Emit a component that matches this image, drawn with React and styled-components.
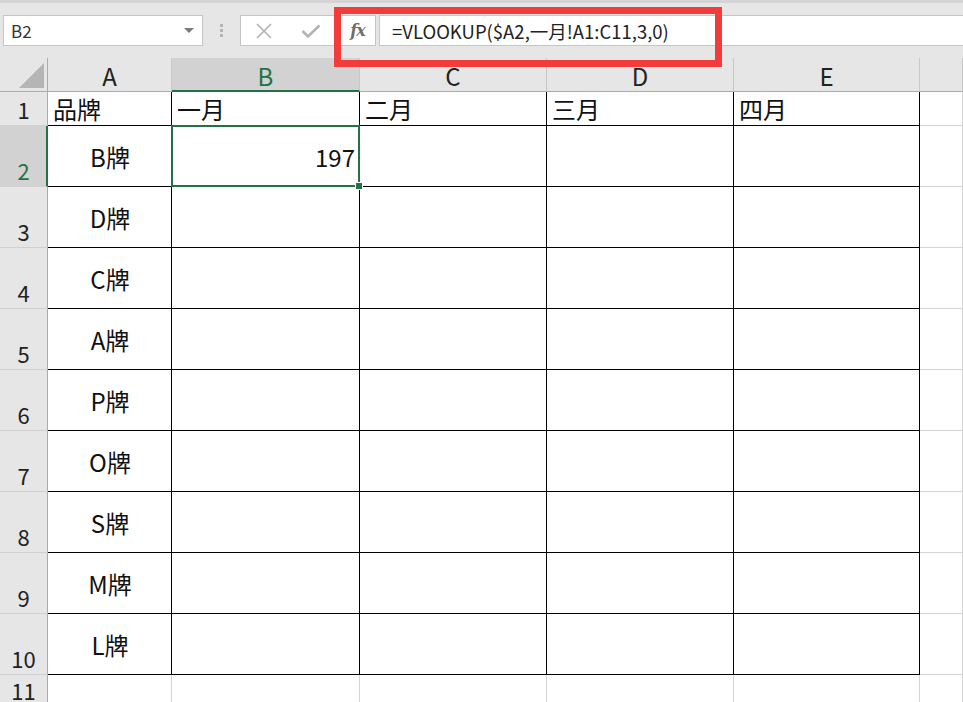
import React from 'react';
import styled, { createGlobalStyle, css } from 'styled-components';

const GlobalStyle = createGlobalStyle`
  html, body { margin: 0; padding: 0; background: #e6e6e6; overflow: hidden; }
  body { font-family: "Noto Sans CJK SC", "Noto Sans", sans-serif; }
`;

const GREEN = '#217346';

const Page = styled.div`
  width: 963px;
  height: 702px;
  overflow: hidden;
  background: #e6e6e6;
`;

const FormulaBar = styled.div`
  position: relative;
  height: 58px;
  box-sizing: border-box;
  border-top: 3px solid #d4d4d4;
  padding-top: 12px;
  display: flex;
  align-items: flex-start;
  background: #e6e6e6;
`;

const NameBox = styled.div`
  margin-left: 3px;
  width: 200px;
  height: 31px;
  box-sizing: border-box;
  background: #fff;
  border: 1px solid #c6c6c6;
  display: flex;
  align-items: center;
  justify-content: space-between;
  padding: 0 8px 0 7px;
  font-size: 17px;
  color: #333;
`;

const Caret = styled.span`
  width: 0;
  height: 0;
  border-left: 5px solid transparent;
  border-right: 5px solid transparent;
  border-top: 5px solid #7b7b7b;
`;

const Grip = styled.div`
  width: 37px;
  height: 31px;
  display: flex;
  flex-direction: column;
  align-items: center;
  justify-content: center;
  gap: 2px;
  span {
    width: 3px;
    height: 3px;
    background: #b4b4b4;
  }
`;

const ActionBox = styled.div`
  width: ${p => p.$w}px;
  height: 31px;
  box-sizing: border-box;
  margin-right: 3px;
  background: #fff;
  border: 1px solid #c6c6c6;
  display: flex;
  align-items: center;
  justify-content: ${p => (p.$center ? 'center' : 'space-around')};
`;

const Fx = styled.span`
  font-family: "DejaVu Serif", "Liberation Serif", serif;
  font-style: italic;
  font-weight: bold;
  font-size: 16px;
  color: #6e6e6e;
  letter-spacing: -1px;
`;

const FormulaInput = styled.div`
  flex: 1;
  height: 31px;
  box-sizing: border-box;
  background: #fff;
  border: 1px solid #c6c6c6;
  border-right: none;
  display: flex;
  align-items: center;
  padding-left: 12px;
  font-size: 18.5px;
  color: #222;
  white-space: nowrap;
`;

const Highlight = styled.div`
  position: absolute;
  left: 334px;
  top: 4px;
  width: 388px;
  height: 60px;
  box-sizing: border-box;
  border: 7px solid #f23b3b;
  pointer-events: none;
`;

const Sheet = styled.div`
  display: grid;
  grid-template-columns: 48px 124px 188px 187px 187px 186px 1fr;
  grid-template-rows: 34px 34px repeat(9, 61px) 27px;
  background: #fff;
`;

const Corner = styled.div`
  background: #e6e6e6;
  border-right: 1px solid #ababab;
  border-bottom: 1px solid #ababab;
  box-sizing: border-box;
  display: flex;
  align-items: flex-end;
  justify-content: flex-end;
  padding: 0 3px 3px 0;
  svg { display: block; }
`;

const ColHead = styled.div`
  box-sizing: border-box;
  background: ${p => (p.$active ? '#d2d2d2' : '#e6e6e6')};
  border-right: 1px solid #c8c8c8;
  border-bottom: ${p => (p.$active ? `2px solid ${GREEN}` : '1px solid #ababab')};
  color: ${p => (p.$active ? GREEN : '#222')};
  font-size: 24px;
  display: flex;
  align-items: center;
  justify-content: center;
  padding-top: 2px;
  ${p => p.$active && css`padding-top: 3px;`}
`;

const RowHead = styled.div`
  box-sizing: border-box;
  background: ${p => (p.$active ? '#d2d2d2' : '#e6e6e6')};
  border-right: ${p => (p.$active ? `2px solid ${GREEN}` : '1px solid #ababab')};
  border-bottom: ${p => (p.$open ? 'none' : '1px solid #d0d0d0')};
  color: ${p => (p.$active ? GREEN : '#222')};
  font-size: 22px;
  line-height: 1;
  display: flex;
  align-items: flex-end;
  justify-content: center;
  padding-bottom: ${p => (p.$open ? '1px' : '5px')};
  ${p => p.$active && css`padding-left: 1px;`}
`;

const Cell = styled.div`
  position: relative;
  box-sizing: border-box;
  border-right: 1px solid ${p => (p.$inTable ? '#000' : '#d4d4d4')};
  border-bottom: ${p => (p.$open ? 'none' : `1px solid ${p.$inTable ? '#000' : '#d4d4d4'}`)};
  font-size: 24px;
  color: #111;
  display: flex;
  align-items: center;
  justify-content: ${p => p.$align || 'flex-start'};
  padding: 0 4px 0 5px;
  white-space: nowrap;
  ${p => p.$selected && css`
    &::after {
      content: '';
      position: absolute;
      top: -1px;
      left: -1px;
      right: -1px;
      bottom: -1px;
      border: 2px solid ${GREEN};
      pointer-events: none;
    }
  `}
`;

const FillHandle = styled.span`
  position: absolute;
  right: -4px;
  bottom: -4px;
  width: 6px;
  height: 6px;
  background: ${GREEN};
  border: 1px solid #fff;
  z-index: 2;
`;

const columns = ['A', 'B', 'C', 'D', 'E', ''];
const header = ['品牌', '一月', '二月', '三月', '四月'];
const brands = ['B牌', 'D牌', 'C牌', 'A牌', 'P牌', 'O牌', 'S牌', 'M牌', 'L牌'];

function CancelIcon() {
  return (
    <svg width="18" height="18" viewBox="0 0 18 18">
      <path d="M2 2 L16 16 M16 2 L2 16" stroke="#b3b3b3" strokeWidth="1.7" fill="none" />
    </svg>
  );
}

function EnterIcon() {
  return (
    <svg width="20" height="16" viewBox="0 0 20 16">
      <path d="M1.5 8 L7 13.5 L18.5 2.5" stroke="#b3b3b3" strokeWidth="2.6" fill="none" />
    </svg>
  );
}

export default function App() {
  const rows = [];

  // row 1: headings
  rows.push(
    <RowHead key="r1">1</RowHead>,
    ...header.map((h, i) => (
      <Cell key={`1-${i}`} $inTable>{h}</Cell>
    )),
    <Cell key="1-f" />
  );

  brands.forEach((b, idx) => {
    const n = idx + 2;
    const active = n === 2;
    rows.push(
      <RowHead key={`r${n}`} $active={active}>{n}</RowHead>,
      <Cell key={`${n}-a`} $inTable $align="center">{b}</Cell>,
      <Cell key={`${n}-b`} $inTable $align="flex-end" $selected={active}>
        {active ? '197' : ''}
        {active && <FillHandle />}
      </Cell>,
      <Cell key={`${n}-c`} $inTable />,
      <Cell key={`${n}-d`} $inTable />,
      <Cell key={`${n}-e`} $inTable />,
      <Cell key={`${n}-f`} />
    );
  });

  // row 11 is only partly visible at the bottom edge
  rows.push(
    <RowHead key="r11" $open>11</RowHead>,
    ...columns.map((c, i) => <Cell key={`11-${i}`} $open />)
  );

  return (
    <Page>
      <GlobalStyle />
      <FormulaBar>
        <NameBox>
          B2
          <Caret />
        </NameBox>
        <Grip>
          <span />
          <span />
          <span />
        </Grip>
        <ActionBox $w={96}>
          <CancelIcon />
          <EnterIcon />
        </ActionBox>
        <ActionBox $w={37} $center>
          <Fx>fx</Fx>
        </ActionBox>
        <FormulaInput>=VLOOKUP($A2,一月!A1:C11,3,0)</FormulaInput>
        <Highlight />
      </FormulaBar>
      <Sheet>
        <Corner>
          <svg width="25" height="25" viewBox="0 0 25 25">
            <path d="M25 0 L25 25 L0 25 Z" fill="#b5b5b5" />
          </svg>
        </Corner>
        {columns.map((c, i) => (
          <ColHead key={i} $active={c === 'B'}>{c}</ColHead>
        ))}
        {rows}
      </Sheet>
    </Page>
  );
}
